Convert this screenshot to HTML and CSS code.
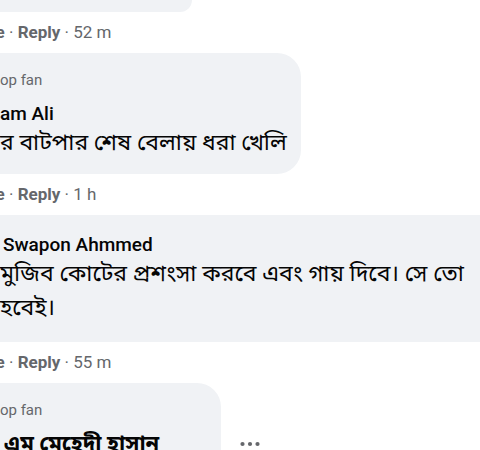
FILE: index.html
```html
<!DOCTYPE html>
<html lang="bn">
  <head>
    <meta charset="UTF-8" />
    <title>Comments</title>
    <link rel="stylesheet" href="styles.css">
  </head>
  <body>
    <div class="thread">
      <div class="comment">
        <div class="bubble bubble-cut"></div>
        <div class="meta"><b class="like">Like</b> · <b>Reply</b> · 52 m</div>
      </div>

      <div class="comment">
        <div class="bubble">
          <div class="badge"><span class="clip">T</span>op fan</div>
          <div class="name">am Ali</div>
          <div class="text">র বাটপার শেষ বেলায় ধরা খেলি</div>
        </div>
        <div class="meta"><b class="like">Like</b> · <b>Reply</b> · 1 h</div>
      </div>

      <div class="comment">
        <div class="bubble bubble-wide">
          <div class="name name-indent">Swapon Ahmmed</div>
          <div class="text">মুজিব কোটের প্রশংসা করবে এবং গায় দিবে। সে তো<br>হবেই।</div>
        </div>
        <div class="meta"><b class="like">Like</b> · <b>Reply</b> · 55 m</div>
      </div>

      <div class="comment comment-row">
        <div class="bubble bubble-fixed">
          <div class="badge"><span class="clip">T</span>op fan</div>
          <div class="name name-bn">এম মেহেদী হাসান</div>
          <div class="text">&nbsp;</div>
        </div>
        <button class="more" aria-label="More">
          <svg width="20" height="6" viewBox="0 0 20 6">
            <circle cx="2.5" cy="3" r="2.1" />
            <circle cx="10" cy="3" r="2.1" />
            <circle cx="17.5" cy="3" r="2.1" />
          </svg>
        </button>
      </div>
    </div>
  </body>
</html>
```

FILE: styles.css
```css
body {
  margin: 0;
  background: #fff;
  color: #050505;
  font-family: Roboto, "Noto Sans Bengali", "Lohit Bengali", "Noto Sans", sans-serif;
  overflow: hidden;
}
.thread {
  width: 480px;
  overflow: hidden;
}
.bubble {
  display: inline-block;
  background: #f0f2f5;
  border-radius: 24px;
  margin-left: -30px;
  padding: 17px 14px 14px 30px;
}
.bubble-cut {
  display: block;
  width: 222px;
  height: 12px;
  padding: 0;
  border-radius: 0 0 24px 0;
}
.bubble-wide {
  display: block;
  width: 560px;
  padding-top: 18px;
  padding-bottom: 17px;
}
.bubble-fixed {
  width: 207px;
}
.meta {
  margin: 9px 0 10px;
  line-height: 22px;
  font-size: 17px;
  color: #65676b;
}
.meta b {
  font-weight: 700;
}
.like {
  display: inline-block;
  margin-left: -27px;
}
.badge {
  font-size: 15px;
  line-height: 20px;
  color: #65676b;
}
.clip {
  display: inline-block;
  margin-left: -9px;
}
.name {
  font-size: 19px;
  font-weight: 500;
  line-height: 24px;
  margin-top: 12px;
}
.bubble-wide .name {
  margin-top: 0;
}
.name-indent {
  padding-left: 3px;
}
.name-bn {
  font-weight: 700;
  font-size: 22px;
  padding-left: 4px;
}
.text {
  font-size: 23px;
  line-height: 34px;
}
.comment-row {
  display: flex;
  align-items: center;
}
.more {
  margin-left: 19px;
  border: 0;
  background: none;
  padding: 0;
}
.more svg {
  display: block;
  fill: #65676b;
}
```
